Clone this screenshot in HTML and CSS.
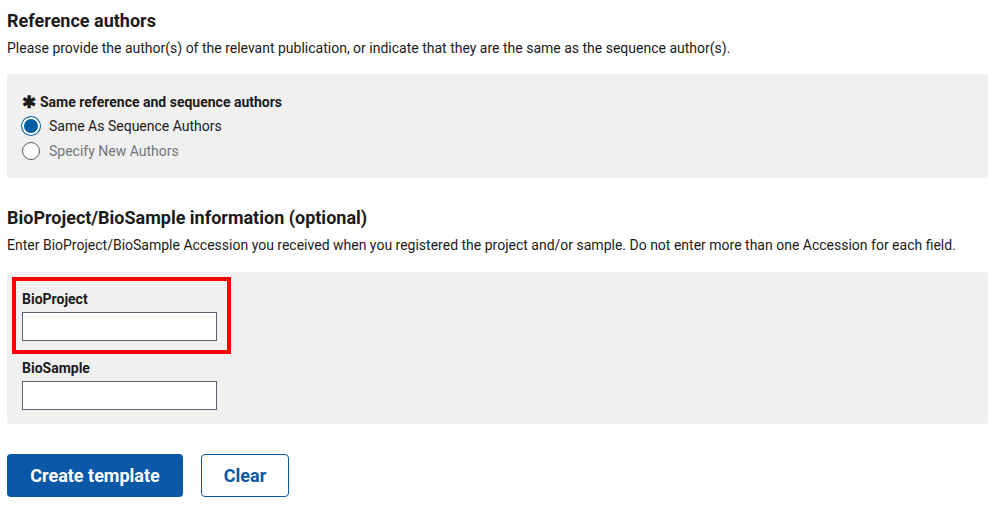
FILE: index.html
```html
<!DOCTYPE html>
<html>
<head>
<meta charset="utf-8">
<link rel="stylesheet" href="styles.css">
</head>
<body>
<div class="page">
  <h2 class="title">Reference authors</h2>
  <p class="desc">Please provide the author(s) of the relevant publication, or indicate that they are the same as the sequence author(s).</p>
  <div class="panel panel-auth">
    <div class="legend"><span class="req">&#x2731;</span>Same reference and sequence authors</div>
    <label class="radio-row"><span class="radio checked"></span><span class="rtext">Same As Sequence Authors</span></label>
    <label class="radio-row"><span class="radio"></span><span class="rtext muted">Specify New Authors</span></label>
  </div>

  <h2 class="title title2">BioProject/BioSample information (optional)</h2>
  <p class="desc">Enter BioProject/BioSample Accession you received when you registered the project and/or sample. Do not enter more than one Accession for each field.</p>
  <div class="panel panel-bio">
    <div class="highlight"></div>
    <div class="field">
      <div class="flabel">BioProject</div>
      <div class="input"></div>
    </div>
    <div class="field">
      <div class="flabel">BioSample</div>
      <div class="input"></div>
    </div>
  </div>

  <div class="actions">
    <button class="btn primary">Create template</button>
    <button class="btn outline">Clear</button>
  </div>
</div>
</body>
</html>
```

FILE: styles.css
```css
* { box-sizing: border-box; }
html, body { margin: 0; padding: 0; background: #fff; }
body { font-family: Roboto, "Liberation Sans", sans-serif; color: #1b1b1b; }
.page { padding: 10px 1px 0 7px; }
.title { margin: 0; font-size: 18px; font-weight: 700; line-height: 22px; color: #1b1b1b; }
.title2 { margin-top: 29px; }
.desc { margin: 6px 0 0; font-size: 14px; line-height: 20px; color: #1b1b1b; }
.panel { background: #f0f0f0; border-radius: 3px; margin-top: 16px; }
.panel-auth { height: 104px; padding: 18px 15px 0; }
.legend { font-size: 14px; font-weight: 700; line-height: 20px; display: flex; align-items: center; margin-bottom: 1px; }
.req { font-size: 17px; margin-right: 4px; line-height: 20px; }
.radio-row { display: flex; align-items: center; height: 25px; font-size: 14px; }
.radio { width: 18px; height: 18px; border-radius: 50%; background: #fff; border: 1px solid #565c65; margin-right: 9px; flex: none; }
.radio.checked { background: #005ea2; border: none; box-shadow: 0 0 0 2px #fff inset, 0 0 0 1px #005ea2; }
.rtext { line-height: 20px; }
.muted { color: #71767a; }
.panel-bio { position: relative; height: 152px; margin-top: 17px; padding: 16px 15px 0; }
.highlight { position: absolute; left: 5px; top: 5px; width: 219px; height: 77px; border: 4.5px solid #ff0000; }
.field { margin-bottom: 16px; }
.flabel { font-size: 14px; font-weight: 700; line-height: 22px; }
.input { width: 195px; height: 29px; margin-top: 2px; background: #fff; border: 1px solid #5d6070; }
.actions { display: flex; gap: 18px; margin-top: 30px; }
.btn { font-family: Roboto, "Liberation Sans", sans-serif; font-size: 18px; font-weight: 700; height: 43px; border-radius: 4px; cursor: pointer; }
.primary { width: 176px; background: #0b58a7; color: #fff; border: none; }
.outline { width: 88px; background: #fff; color: #0b58a7; border: 1.5px solid #0b58a7; }
```
